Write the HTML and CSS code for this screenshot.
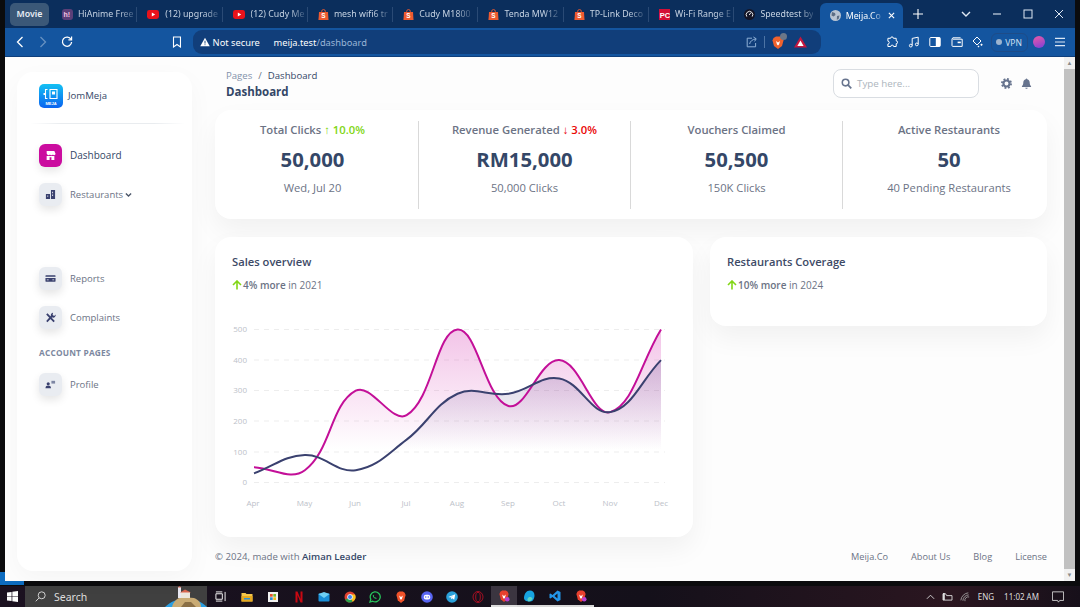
FILE: index.html
```html
<!DOCTYPE html>
<html lang="en">
<head>
  <title>Meija.Co</title>
  <link rel="stylesheet" href="styles.css">
</head>
<body>
  <svg class="icon-defs">
    <symbol id="shopee" viewBox="0 0 11 12">
      <path d="M3.5 3.500V2.600a2 2 0 0 1 4 0v.9" fill="none" stroke="#ee5a30" stroke-width="1"/>
      <path d="M.6 3.200h9.800L11 12H0z" fill="#ee5a30"/>
      <text x="5.500" y="10" class="fav-text fav-s" fill="#fff">S</text>
    </symbol>
  </svg>

  <div class="wallpaper"></div>

  <div class="window">
    <div class="tabstrip">
      <div class="tab-group">Movie</div>
      <div class="tab">
        <svg class="fav" viewBox="0 0 11 11"><rect width="11" height="11" rx="3" fill="#5b3f78"/><text x="1.600" y="8.400" class="fav-text" fill="#f4c6e4">h!</text></svg>
        <span class="tab-label">HiAnime Free</span>
      </div>
      <div class="tab">
        <svg class="fav fav-wide" viewBox="0 0 12 9"><rect width="12" height="9" rx="2.400" fill="#e8121b"/><path d="M4.800 2.500v4l3.400-2z" fill="#fff"/></svg>
        <span class="tab-label">(12) upgrade</span>
      </div>
      <div class="tab">
        <svg class="fav fav-wide" viewBox="0 0 12 9"><rect width="12" height="9" rx="2.400" fill="#e8121b"/><path d="M4.800 2.500v4l3.400-2z" fill="#fff"/></svg>
        <span class="tab-label">(12) Cudy Me</span>
      </div>
      <div class="tab">
        <svg class="fav"><use href="#shopee"/></svg>
        <span class="tab-label">mesh wifi6 tr</span>
      </div>
      <div class="tab">
        <svg class="fav"><use href="#shopee"/></svg>
        <span class="tab-label">Cudy M1800</span>
      </div>
      <div class="tab">
        <svg class="fav"><use href="#shopee"/></svg>
        <span class="tab-label">Tenda MW12</span>
      </div>
      <div class="tab">
        <svg class="fav"><use href="#shopee"/></svg>
        <span class="tab-label">TP-Link Deco</span>
      </div>
      <div class="tab">
        <svg class="fav" viewBox="0 0 11 11"><rect width="11" height="11" fill="#d40f37"/><text x="0.700" y="8.600" class="fav-text fav-pc" fill="#fff">PC</text></svg>
        <span class="tab-label">Wi-Fi Range E</span>
      </div>
      <div class="tab tab-plain">
        <svg class="fav" viewBox="0 0 11 11"><circle cx="5.500" cy="5.500" r="5.500" fill="#141526"/><path d="M2.800 7.600a3.300 3.300 0 1 1 5.400 0" fill="none" stroke="#fff" stroke-width=".9"/><path d="M5.200 6l1.600-2.200" stroke="#fff" stroke-width=".9"/></svg>
        <span class="tab-label">Speedtest by</span>
      </div>
      <div class="tab-active">
        <svg class="fav" viewBox="0 0 11 11"><circle cx="5.500" cy="5.500" r="5.500" fill="#b9c4d2"/><path d="M2 2l3 1 .5 2-2 1.500-2-1zM7 6l2.500-.5L8.600 9 6.800 9.800z" fill="#5c6d84"/></svg>
        <span class="tab-label">Meija.Co</span>
        <svg class="tab-close" viewBox="0 0 8 8"><path d="M1 1l6 6M7 1L1 7" stroke="#fff" stroke-width="1.300"/></svg>
      </div>
      <svg class="tab-new" viewBox="0 0 10 10"><path d="M5 0v10M0 5h10" stroke="#fff" stroke-width="1.100"/></svg>
      <div class="win-btns">
        <svg viewBox="0 0 10 10"><path d="M1 3l4 4 4-4" fill="none" stroke="#dfe8f3" stroke-width="1.400"/></svg>
        <svg viewBox="0 0 10 10"><path d="M1 5h8" stroke="#dfe8f3" stroke-width="1.100"/></svg>
        <svg viewBox="0 0 10 10"><rect x="1" y="1" width="8" height="8" fill="none" stroke="#dfe8f3"/></svg>
        <svg viewBox="0 0 10 10"><path d="M1 1l8 8M9 1l-8 8" stroke="#dfe8f3"/></svg>
      </div>
    </div>

    <div class="toolbar">
      <div class="nav-btns">
        <svg viewBox="0 0 8 12"><path d="M6.500 1L1.500 6l5 5" fill="none" stroke="#fff" stroke-width="1.300"/></svg>
        <svg class="dim" viewBox="0 0 8 12"><path d="M1.500 1l5 5-5 5" fill="none" stroke="#fff" stroke-width="1.300"/></svg>
        <svg viewBox="0 0 12 12"><path d="M10 3.400A4.600 4.600 0 1 0 10.600 6" fill="none" stroke="#fff" stroke-width="1.300"/><path d="M7.400 3.800h3.200V.6" fill="none" stroke="#fff" stroke-width="1.200"/></svg>
      </div>
      <svg class="bookmark" viewBox="0 0 10 12"><path d="M1.500 11V1h7v10L5 8.500z" fill="none" stroke="#fff" stroke-width="1.100"/></svg>
      <div class="address">
        <svg class="warn" viewBox="0 0 12 11"><path d="M6 .5L11.700 10.500H.3z" fill="#fff"/><path d="M6 4v3.400M6 8.300v1" stroke="#124178" stroke-width="1.100"/></svg>
        <span class="not-secure">Not secure</span>
        <span class="url">meija.test<span class="url-path">/dashboard</span></span>
        <svg class="share" viewBox="0 0 12 12"><path d="M7 2.200H2.200v8.600h8.400V7" fill="none" stroke="#8fb0d6" stroke-width="1"/><path d="M4.600 8c.6-2.800 2.600-4.400 6.400-5.200M8.400 1l2.800 1.800L9.600 5.400" fill="none" stroke="#8fb0d6" stroke-width="1"/></svg>
        <span class="addr-sep"></span>
        <span class="lion">
          <svg viewBox="0 0 12 13"><path d="M1.500 2L4 .6h4L10.500 2l1 2.400L10 10l-4 3-4-3L.5 4.400z" fill="#f0622d"/><path d="M4 5l2 1.400L8 5 7 8.600 6 9.400 5 8.600z" fill="#fff"/></svg>
          <span class="lion-badge"></span>
        </span>
        <svg class="rewards" viewBox="0 0 13 12"><path d="M6.500 .5L13 11.500H0z" fill="#c3173f"/><path d="M6.500 4.600L9.600 10H3.400z" fill="#fff"/></svg>
      </div>
      <div class="tool-icons">
        <svg viewBox="0 0 12 12"><path d="M4.600 2.300a1.400 1.400 0 0 1 2.800 0h2.800v2.600a1.400 1.400 0 0 1 0 2.800v2.800H7.600a1.400 1.400 0 0 0-2.800 0H1.900V8a1.400 1.400 0 0 0 0-2.800V2.300z" fill="none" stroke="#fff"/></svg>
        <svg viewBox="0 0 12 12"><path d="M4.200 9.500V2.400l6-1.200v7" fill="none" stroke="#fff"/><circle cx="2.800" cy="9.600" r="1.400" fill="none" stroke="#fff"/><circle cx="8.800" cy="8.400" r="1.400" fill="none" stroke="#fff"/></svg>
        <svg viewBox="0 0 12 12"><rect x=".8" y="1.500" width="10.400" height="9" rx="1" fill="none" stroke="#fff"/><rect x="6.800" y="1.500" width="4.400" height="9" fill="#fff"/></svg>
        <svg viewBox="0 0 12 12"><path d="M1 3v6.600a.8.8 0 0 0 .8.8h9.400V3.200H1.800M1 3l.8-1.200H9.600" fill="none" stroke="#fff"/><rect x="6.600" y="5.600" width="3.200" height="1.600" fill="#fff"/></svg>
        <svg viewBox="0 0 12 12"><path d="M5 1L9 5 5 9 1 5z" fill="none" stroke="#fff"/><path d="M9.500 7.500l1.300 1.300-1.300 1.300-1.300-1.300zM6.500 9.500l1 1-1 1-1-1z" fill="#fff"/></svg>
        <span class="vpn"><i class="vpn-dot"></i>VPN</span>
        <span class="avatar"></span>
        <svg viewBox="0 0 12 12"><path d="M1 2.400h10M1 6h10M1 9.600h10" stroke="#dbe7f5" stroke-width="1.100"/></svg>
      </div>
    </div>

    <div class="viewport">
      <aside class="sidebar">
        <div class="brand">
          <svg class="brand-logo" viewBox="0 0 24 24">
            <defs><linearGradient id="logoGrad" x1="0" y1="0" x2="0" y2="1"><stop offset="0" stop-color="#14c1f3"/><stop offset="1" stop-color="#0a63f0"/></linearGradient></defs>
            <rect width="24" height="24" rx="5" fill="url(#logoGrad)"/>
            <path d="M8.500 5.500h-2v9h2M11 5.500h7v9h-7z" fill="none" stroke="#fff" stroke-width="1.100"/>
            <rect x="13" y="7.500" width="3" height="3" fill="#fff"/>
            <rect x="4.500" y="9" width="2" height="2" fill="#fff"/>
            <text x="12" y="20.500" class="logo-text" fill="#fff">MEJA</text>
          </svg>
          <span class="brand-name">JomMeja</span>
        </div>
        <div class="side-divider"></div>
        <nav class="side-nav">
          <a class="side-item active">
            <span class="tile">
              <svg viewBox="0 0 12 12"><path d="M1.800 1h8.400l1.300 3.200c0 1.600-2.200 1.900-2.800.7-.6 1.200-2.800 1.200-3.400 0-.6 1.200-2.800.9-3.400-.7zM1.800 6.600h8.400V11H7V8H5v3H1.800z" fill="currentColor"/></svg>
            </span>
            <span class="item-label">Dashboard</span>
          </a>
          <a class="side-item">
            <span class="tile">
              <svg viewBox="0 0 12 12"><path d="M6.500 1h4.500v10H6.500zM1 5.500h4.500V11H1z" fill="currentColor"/><path d="M7.800 3h1v1.500h-1zM7.800 6h1v1.500h-1zM2.500 7h1v1.500h-1z" fill="#e9ecf1"/></svg>
            </span>
            <span class="item-label">Restaurants</span>
            <svg class="caret" viewBox="0 0 8 6"><path d="M1 1.200l3 3 3-3" fill="none" stroke="#4a5568" stroke-width="1.500"/></svg>
          </a>
          <a class="side-item reports">
            <span class="tile">
              <svg viewBox="0 0 12 12"><path d="M1 2.500h10a.5.5 0 0 1 .5.5v1H.5V3a.5.5 0 0 1 .5-.5zM.5 5.500h11V9a.5.5 0 0 1-.5.5H1A.5.5 0 0 1 .5 9zM2 7v1h2V7zM8 7v1h2V7z" fill="currentColor" fill-rule="evenodd"/></svg>
            </span>
            <span class="item-label">Reports</span>
          </a>
          <a class="side-item">
            <span class="tile">
              <svg viewBox="0 0 12 12"><path d="M2 10.500L8 4M2 2l8 8.500" fill="none" stroke="currentColor" stroke-width="2"/><path d="M8.800 .8a2.700 2.700 0 0 0-2.300 3.700l1.600 1.500a2.700 2.700 0 0 0 3.500-3.200L10 4.400 8.300 3.200z" fill="currentColor"/></svg>
            </span>
            <span class="item-label">Complaints</span>
          </a>
          <div class="side-heading">ACCOUNT PAGES</div>
          <a class="side-item">
            <span class="tile">
              <svg viewBox="0 0 12 12"><circle cx="3.500" cy="5.200" r="1.700" fill="currentColor"/><path d="M.5 10c0-2 1.300-2.800 3-2.800s3 .8 3 2.800z" fill="currentColor"/><path d="M7 2h4v3H7z" fill="#7d86a3"/></svg>
            </span>
            <span class="item-label">Profile</span>
          </a>
        </nav>
      </aside>

      <main class="main">
        <header class="topbar">
          <div>
            <div class="crumbs"><span class="crumb-dim">Pages</span><span class="crumb-sep">/</span>Dashboard</div>
            <div class="page-title">Dashboard</div>
          </div>
          <div class="top-actions">
            <div class="search">
              <svg viewBox="0 0 12 12"><circle cx="5" cy="5" r="3.600" fill="none" stroke="#67748e" stroke-width="1.700"/><path d="M7.800 7.800l3.400 3.400" stroke="#67748e" stroke-width="1.900"/></svg>
              <span>Type here...</span>
            </div>
            <svg class="top-icon top-gear" viewBox="0 0 12 12"><circle cx="6" cy="6" r="3.300" fill="none" stroke="#67748e" stroke-width="2.300"/><circle cx="6" cy="6" r="5" fill="none" stroke="#67748e" stroke-width="2" stroke-dasharray="2 1.930"/></svg>
            <svg class="top-icon" viewBox="0 0 12 12"><path d="M6 .5c.5 0 .8.400.8.900 1.800.4 2.700 1.800 2.700 3.600 0 2 .6 3 1.500 4v.7H1V9c.9-1 1.500-2 1.500-4 0-1.800.9-3.200 2.700-3.600 0-.5.300-.9.800-.9zM4.700 10.500h2.600c0 .7-.6 1.200-1.300 1.200s-1.300-.5-1.300-1.200z" fill="#67748e"/></svg>
          </div>
        </header>

        <section class="card stats">
          <div class="stats-row">
            <div class="stat">
              <div class="stat-label">Total Clicks <span class="up">↑ 10.0%</span></div>
              <div class="stat-value">50,000</div>
              <div class="stat-sub">Wed, Jul 20</div>
            </div>
            <div class="stat">
              <div class="stat-label">Revenue Generated <span class="down">↓ 3.0%</span></div>
              <div class="stat-value">RM15,000</div>
              <div class="stat-sub">50,000 Clicks</div>
            </div>
            <div class="stat">
              <div class="stat-label">Vouchers Claimed</div>
              <div class="stat-value">50,500</div>
              <div class="stat-sub">150K Clicks</div>
            </div>
            <div class="stat">
              <div class="stat-label">Active Restaurants</div>
              <div class="stat-value">50</div>
              <div class="stat-sub">40 Pending Restaurants</div>
            </div>
          </div>
        </section>

        <div class="panels">
          <section class="card panel">
            <h3>Sales overview</h3>
            <p class="panel-sub"><svg class="arrow" viewBox="0 0 10 10"><path d="M5 9.500V1.500M1 5l4-4 4 4" fill="none" stroke="#82d616" stroke-width="1.600"/></svg><b>4% more</b> in 2021</p>
            <svg id="sales-chart" class="chart" viewBox="0 0 444 195" width="444" height="195">
              <defs>
                <linearGradient id="pinkFill" gradientUnits="userSpaceOnUse" x1="0" y1="10" x2="0" y2="130"><stop offset="0" stop-color="#cb0c9f" stop-opacity=".24"/><stop offset="1" stop-color="#cb0c9f" stop-opacity="0"/></linearGradient>
                <linearGradient id="blueFill" gradientUnits="userSpaceOnUse" x1="0" y1="10" x2="0" y2="130"><stop offset="0" stop-color="#3a1c71" stop-opacity=".26"/><stop offset="1" stop-color="#3a1c71" stop-opacity="0"/></linearGradient>
              </defs>
              <g class="grid">
                <line x1="22" x2="433" y1="9.500" y2="9.500"/>
                <line x1="22" x2="433" y1="40" y2="40"/>
                <line x1="22" x2="433" y1="70.500" y2="70.500"/>
                <line x1="22" x2="433" y1="101" y2="101"/>
                <line x1="22" x2="433" y1="132" y2="132"/>
                <line x1="22" x2="433" y1="162.500" y2="162.500"/>
              </g>
              <g class="y-labels">
                <text x="15" y="12">500</text>
                <text x="15" y="42.500">400</text>
                <text x="15" y="73">300</text>
                <text x="15" y="103.500">200</text>
                <text x="15" y="134.500">100</text>
                <text x="15" y="165">0</text>
              </g>
              <g class="x-labels">
                <text x="21" y="186">Apr</text>
                <text x="72.500" y="186">May</text>
                <text x="123" y="186">Jun</text>
                <text x="174" y="186">Jul</text>
                <text x="225" y="186">Aug</text>
                <text x="276" y="186">Sep</text>
                <text x="327" y="186">Oct</text>
                <text x="378" y="186">Nov</text>
                <text x="429" y="186">Dec</text>
              </g>
              <path id="pink-area" fill="url(#pinkFill)"/>
              <path id="blue-area" fill="url(#blueFill)"/>
              <path id="pink-line" class="line" stroke="#c30f98"/>
              <path id="blue-line" class="line" stroke="#3a416f"/>
            </svg>
          </section>
          <section class="card panel panel-small">
            <h3>Restaurants Coverage</h3>
            <p class="panel-sub"><svg class="arrow" viewBox="0 0 10 10"><path d="M5 9.500V1.500M1 5l4-4 4 4" fill="none" stroke="#82d616" stroke-width="1.600"/></svg><b>10% more</b> in 2024</p>
          </section>
        </div>

        <footer class="foot">
          <div>© 2024, made with <b>Aiman Leader</b></div>
          <div class="foot-links"><a>Meija.Co</a><a>About Us</a><a>Blog</a><a>License</a></div>
        </footer>
      </main>

      <div class="scrollbar">
        <span class="scroll-btn">▲</span>
        <span class="scroll-thumb"></span>
        <span class="scroll-btn">▼</span>
      </div>
    </div>
  </div>

  <div class="taskbar">
    <svg class="start" viewBox="0 0 12 12"><path d="M0 1.700L5 1v4.600H0zM5.800.9L12 0v5.600H5.800zM0 6.400h5V11l-5-.7zM5.800 6.400H12V12l-6.200-.9z" fill="#fff"/></svg>
    <div class="task-search">
      <svg class="task-lens" viewBox="0 0 12 12"><circle cx="7.300" cy="4.700" r="3.800" fill="none" stroke="#ddd"/><path d="M4.500 7.500L.8 11.200" stroke="#ddd"/></svg>
      <span>Search</span>
      <svg class="island" viewBox="0 0 42 21"><path d="M0 21c6-6 13-8 21-8s15 2 21 8z" fill="#2a9fe3"/><path d="M7 21c1-5 5-9 10-10l12 1c5 2 7 5 7 9z" fill="#c9ab74"/><path d="M16 21l4-5h6l5 5z" fill="#8a6f45"/><rect x="13" y="1" width="3" height="11" fill="#e8e8f2"/><path d="M12.500 1.500L14.500 0l2 1.500z" fill="#c85a48"/><rect x="16" y="6" width="9" height="6" fill="#ece6dc"/><path d="M15 6.500l5-3 6 3z" fill="#d8654e"/></svg>
    </div>
    <div class="task-icons">
      <span class="task-view"><svg viewBox="0 0 12 12"><path d="M1 1h7M1 11h7M1 3h7v6H1zM11 1v10" fill="none" stroke="#fff"/></svg></span>
      <span class="app"><svg viewBox="0 0 12 12"><path d="M.5 2h4l1 1h6v7.500H.5z" fill="#f5c64a"/><rect x=".5" y="5" width="11" height="5.500" fill="#e6a920"/><rect x="3" y="7" width="6" height="1.500" fill="#2f8fd3"/></svg></span>
      <span class="app"><svg viewBox="0 0 12 12"><rect x="1" y="1" width="10" height="10" fill="#f1f1f1"/><rect x="3" y="3" width="2.700" height="2.700" fill="#e8532a"/><rect x="6.300" y="3" width="2.700" height="2.700" fill="#75b72b"/><rect x="3" y="6.300" width="2.700" height="2.700" fill="#2f8fd3"/><rect x="6.300" y="6.300" width="2.700" height="2.700" fill="#f5b91f"/></svg></span>
      <span class="app"><svg viewBox="0 0 12 12"><path d="M3.500.5h2L8.500 8V.5h2v11h-2L5.500 4v7.500h-2z" fill="#c90812"/></svg></span>
      <span class="app"><svg viewBox="0 0 12 12"><rect x=".5" y="2.500" width="11" height="8" rx=".8" fill="#1a8fd8"/><path d="M.5 3l5.500 4 5.500-4L6 1z" fill="#6fd0f5"/></svg></span>
      <span class="app"><svg viewBox="0 0 12 12"><circle cx="6" cy="6" r="5.500" fill="#e0412f"/><path d="M6 6L1.200 8.800A5.500 5.500 0 0 0 8.800 10.800z" fill="#2ba24c"/><path d="M6 6l2.800 4.800A5.500 5.500 0 0 0 11 3.500H6z" fill="#f9c41d"/><circle cx="6" cy="6" r="2.500" fill="#3f86ee" stroke="#fff" stroke-width=".8"/></svg></span>
      <span class="app"><svg viewBox="0 0 12 12"><path d="M1 11l.8-2.800A5 5 0 1 1 3.700 10.200z" fill="none" stroke="#27c25a" stroke-width="1.300"/><path d="M4.200 3.700c-.8.800-.4 2 .6 3 1 1 2.200 1.500 3 .7l-1-1.100-.7.400-1.300-1.300.4-.7z" fill="#27c25a"/></svg></span>
      <span class="app"><svg viewBox="0 0 12 13"><path d="M2 2L4 .5h4L10 2l1 2.400L9.500 10 6 13 2.500 10 1 4.400z" fill="#f0522a"/><path d="M4 5l2 1.400L8 5 7 8.600 6 9.400 5 8.600z" fill="#fff"/></svg></span>
      <span class="app"><svg viewBox="0 0 12 12"><circle cx="6" cy="6" r="5.800" fill="#5865f2"/><rect x="2.800" y="3.800" width="6.400" height="4.600" rx="2" fill="#fff"/><circle cx="4.700" cy="6" r=".8" fill="#5865f2"/><circle cx="7.300" cy="6" r=".8" fill="#5865f2"/></svg></span>
      <span class="app"><svg viewBox="0 0 12 12"><circle cx="6" cy="6" r="5.800" fill="#2aa1da"/><path d="M2.300 6l7-2.800-1.100 5.600-2-1.500-1 1-.2-1.700 2.600-2.100-3.300 2z" fill="#fff"/></svg></span>
      <span class="app"><svg viewBox="0 0 12 12"><ellipse cx="6" cy="6" rx="5" ry="5.500" fill="none" stroke="#a30f22"/><ellipse cx="6" cy="6" rx="2.300" ry="4.700" fill="none" stroke="#a30f22"/></svg></span>
      <span class="app app-active"><svg viewBox="0 0 12 13"><path d="M2 2L4 .5h4L10 2l1 2.400L9.500 10 6 13 2.500 10 1 4.400z" fill="#e8402e"/><path d="M4 5l2 1.400L8 5 7 8.600 6 9.400 5 8.600z" fill="#fff"/><circle cx="9.500" cy="10" r="2.500" fill="#b73fd0"/></svg></span>
      <span class="app app-running"><svg viewBox="0 0 12 12"><path d="M1 8c0-4 2.500-7.500 6-7.500 2.500 0 4.500 2 4.500 4.800 0 3-1.500 6.200-4 6.200C4.500 11.500 1 11 1 8z" fill="#17a4e0"/><path d="M5.500 11.500c-1.500-1-1.500-3 0-4 1.500-1 3.500-.3 4 1-.8 2-2.200 3-4 3z" fill="#5ed5c5"/></svg></span>
      <span class="app app-running"><svg viewBox="0 0 12 12"><path d="M8.500.5l3 1.500v8l-3 1.500L3.500 7 1.500 8.500.5 8V4l1-.5 2 1.500zM8.500 3.500L5.500 6l3 2.500z" fill="#2395e8"/></svg></span>
      <span class="app app-running"><svg viewBox="0 0 12 13"><path d="M2 2L4 .5h4L10 2l1 2.400L9.500 10 6 13 2.500 10 1 4.400z" fill="#e8402e"/><path d="M4 5l2 1.400L8 5 7 8.600 6 9.400 5 8.600z" fill="#fff"/><circle cx="9.500" cy="10" r="2.500" fill="#b73fd0"/></svg></span>
    </div>
    <div class="tray">
      <svg class="tray-caret" viewBox="0 0 10 6"><path d="M1 5l4-4 4 4" fill="none" stroke="#ddd"/></svg>
      <svg class="tray-net" viewBox="0 0 12 10"><path d="M1 9V2h3l1 2h6v5z" fill="none" stroke="#ddd"/><path d="M1 1h2v8H1z" fill="#ddd"/></svg>
      <svg class="tray-wifi" viewBox="0 0 12 12"><path d="M1 10a10 10 0 0 1 9-9M3.500 10.500a7 7 0 0 1 7-7M6 11a4 4 0 0 1 5-5" fill="none" stroke="#aaa"/></svg>
      <span class="tray-lang">ENG</span>
      <span class="tray-time">11:02 AM</span>
      <svg class="tray-note" viewBox="0 0 14 14"><path d="M.5 1h13v10H9l-1.500 2L6.500 11H.5z" fill="none" stroke="#ddd"/></svg>
    </div>
  </div>

  <script src="chart.js"></script>
</body>
</html>
```

FILE: styles.css
```css
* {
  box-sizing: border-box;
}

body {
  margin: 0;
  width: 1080px;
  height: 607px;
  overflow: hidden;
  position: relative;
  background-color: #0b0b0d;
  font-family: "Open Sans", Arial, sans-serif;
  color: #6c7385;
}

.icon-defs {
  display: none;
}

.wallpaper {
  position: absolute;
  left: 0;
  top: 572px;
  width: 24px;
  height: 13px;
  background-color: #0d6cc0;
}

.window {
  position: relative;
  width: 1070px;
  height: 581px;
  margin-left: 5px;
  display: flex;
  flex-direction: column;
}

/* browser chrome */
.tabstrip {
  height: 28px;
  flex: none;
  display: flex;
  align-items: center;
  background-color: #0b2e5c;
  color: #c6d3e3;
  font-family: "Noto Sans", Arial, sans-serif;
  font-size: 8.8px;
  padding-left: 5px;
}

.tab-group {
  width: 39px;
  height: 23px;
  margin-right: 3px;
  border-radius: 5px;
  background-color: #3b5878;
  color: #e8eef5;
  font-weight: 600;
  display: flex;
  align-items: center;
  justify-content: center;
}

.tab {
  width: 85.3px;
  height: 15px;
  flex: none;
  padding-left: 10px;
  display: flex;
  align-items: center;
  border-right: 1px solid #2a4a75;
}

.tab-plain {
  border-right: none;
}

.fav {
  width: 11px;
  height: 11px;
  flex: none;
  margin-right: 5px;
}

.fav-wide {
  width: 12px;
  margin-right: 6px;
}

.fav-text {
  font-family: "Liberation Sans", Arial, sans-serif;
  font-size: 7px;
  font-weight: 700;
}

.fav-pc {
  font-size: 7.5px;
}

.fav-s {
  text-anchor: middle;
}

.tab-label {
  flex: none;
  white-space: nowrap;
  -webkit-mask-image: linear-gradient(to right, #000 72%, rgba(0, 0, 0, .25));
  mask-image: linear-gradient(to right, #000 72%, rgba(0, 0, 0, .25));
}

.tab-active {
  width: 83px;
  height: 25px;
  margin-top: 3px;
  flex: none;
  display: flex;
  align-items: center;
  padding-left: 10px;
  border-radius: 6px 6px 0 0;
  background-color: #14559f;
  color: #fff;
}

.tab-close {
  width: 7px;
  height: 7px;
  margin-left: auto;
  margin-right: 8px;
}

.tab-new {
  width: 10px;
  height: 10px;
  margin-left: 10px;
}

.win-btns {
  margin-left: auto;
  display: flex;
  align-items: center;
  padding-right: 11px;
}

.win-btns svg {
  width: 10px;
  height: 10px;
  margin-left: 21px;
}

.toolbar {
  height: 29px;
  flex: none;
  display: flex;
  align-items: center;
  background-color: #14559f;
  border-bottom: 1px solid #0f3f7c;
  color: #fff;
  font-family: "Noto Sans", Arial, sans-serif;
}

.nav-btns {
  width: 167px;
  padding-left: 11px;
  display: flex;
  align-items: center;
  gap: 15px;
}

.nav-btns svg {
  width: 8px;
  height: 12px;
}

.nav-btns svg:last-child {
  width: 12px;
  margin-left: -1px;
}

.dim {
  opacity: .35;
}

.bookmark {
  width: 10px;
  height: 12px;
}

.address {
  width: 630px;
  height: 24px;
  margin-left: 11px;
  padding-left: 7px;
  display: flex;
  align-items: center;
  border-radius: 9px;
  background-color: #113e7a;
  font-size: 9.3px;
}

.warn {
  width: 10px;
  height: 10px;
  margin-right: 3px;
}

.not-secure {
  width: 61px;
  white-space: nowrap;
}

.url {
  width: 471px;
  white-space: nowrap;
}

.url-path {
  color: #9ab5d6;
}

.share {
  width: 12px;
  height: 12px;
}

.addr-sep {
  width: 1px;
  height: 12px;
  margin: 0 7px;
  background-color: #4d74a5;
}

.lion {
  position: relative;
  width: 12px;
  height: 13px;
  margin-right: 10px;
}

.lion svg {
  display: block;
  width: 12px;
  height: 13px;
}

.lion-badge {
  position: absolute;
  top: -3px;
  right: -3px;
  width: 7px;
  height: 7px;
  border-radius: 50%;
  background-color: #6c7788;
}

.rewards {
  width: 13px;
  height: 12px;
}

.tool-icons {
  flex: 1;
  padding-left: 65px;
  display: flex;
  align-items: center;
}

.tool-icons svg {
  width: 12px;
  height: 12px;
  margin-right: 9.5px;
  flex: none;
}

.vpn {
  width: 37px;
  height: 19px;
  margin-left: -3px;
  display: flex;
  align-items: center;
  justify-content: center;
  gap: 3px;
  border: 1px solid #1e4c88;
  border-radius: 6px;
  font-size: 8.5px;
  color: #cfe0f3;
}

.vpn-dot {
  width: 6px;
  height: 6px;
  border-radius: 50%;
  background-color: #9db4cf;
}

.avatar {
  width: 12px;
  height: 12px;
  margin: 0 9px 0 5px;
  flex: none;
  border-radius: 50%;
  background: linear-gradient(160deg, #ee5aa4, #7a3fd8);
}

/* page */
.viewport {
  flex: 1;
  display: flex;
  min-height: 0;
  background-color: #fdfdfd;
}

.sidebar {
  width: 175px;
  margin: 15px 0 10px 12px;
  flex: none;
  padding: 12px 0 0 22px;
  border-radius: 16px;
  background-color: #fff;
  box-shadow: 0 8px 26px rgba(0, 0, 0, .035);
}

.brand {
  display: flex;
  align-items: center;
  gap: 5px;
  font-size: 9.6px;
  color: #344767;
}

.brand-name {
  padding-bottom: 2px;
}

.brand-logo {
  width: 24px;
  height: 24px;
}

.logo-text {
  font-family: "Liberation Sans", Arial, sans-serif;
  font-size: 4px;
  font-weight: 700;
  text-anchor: middle;
}

.side-divider {
  height: 1px;
  margin: 15px 7px 0 -9px;
  background: linear-gradient(to right, transparent, #e9ecef 20%, #e9ecef 80%, transparent);
}

.side-nav {
  margin-top: 20px;
  display: flex;
  flex-direction: column;
  gap: 16px;
}

.side-item {
  height: 23px;
  display: flex;
  align-items: center;
  font-size: 9.5px;
  color: #6c7385;
}

.side-item.active {
  color: #344767;
  font-size: 10px;
  font-weight: 500;
}

.active .item-label {
  padding-bottom: 1px;
}

.reports {
  margin-top: 45px;
}

.tile {
  width: 23px;
  height: 23px;
  margin-right: 8px;
  display: flex;
  align-items: center;
  justify-content: center;
  border-radius: 6px;
  background-color: #e9ecf1;
  color: #3a416f;
  box-shadow: 0 4px 8px rgba(0, 0, 0, .1);
}

.tile svg {
  width: 11px;
  height: 11px;
}

.active .tile {
  background-color: #cb0c9f;
  color: #fff;
}

.caret {
  width: 7px;
  height: 6px;
  margin-left: 2px;
}

.side-heading {
  margin: 2px 0 -2px;
  font-size: 8.3px;
  line-height: 12px;
  font-weight: 700;
  letter-spacing: .2px;
  color: #7c88a0;
}

.main {
  width: 832px;
  margin-left: 23px;
  padding-top: 12px;
  flex: none;
}

.topbar {
  height: 29px;
  padding-left: 11px;
  display: flex;
  justify-content: space-between;
}

.crumbs {
  font-size: 9.6px;
  line-height: 14px;
  color: #344767;
}

.crumb-dim {
  color: #8392ab;
}

.crumb-sep {
  margin: 0 6px;
  color: #6c7385;
}

.page-title {
  margin-top: 1px;
  font-size: 11.5px;
  line-height: 15px;
  font-weight: 700;
  color: #344767;
}

.top-actions {
  padding-right: 15px;
  display: flex;
  align-items: center;
}

.search {
  width: 146px;
  height: 29px;
  padding-left: 7px;
  display: flex;
  align-items: center;
  gap: 5px;
  border: 1px solid #d9dde2;
  border-radius: 8px;
  background-color: #fff;
  font-size: 9.8px;
  color: #adb5bd;
}

.search svg {
  width: 11px;
  height: 11px;
}

.top-icon {
  width: 11px;
  height: 11px;
  margin-left: 9px;
}

.top-gear {
  margin-left: 22px;
}

.card {
  border-radius: 16px;
  background-color: #fff;
  box-shadow: 0 12px 27px rgba(0, 0, 0, .05);
}

.stats {
  height: 109px;
  margin-top: 12px;
  padding-top: 11px;
}

.stats-row {
  margin: 0 -8px;
  display: grid;
  grid-template-columns: repeat(4, 212px);
}

.stat {
  height: 88px;
  text-align: center;
  border-right: 1px solid #d9d9d9;
}

.stat:last-child {
  border-right: none;
}

.stat-label {
  padding-top: 1px;
  font-size: 11.3px;
  line-height: 15px;
  font-weight: 600;
  color: #6c7385;
}

.stat-value {
  margin-top: 7px;
  font-size: 20.3px;
  line-height: 30px;
  font-weight: 700;
  color: #344767;
}

.stat-sub {
  margin-top: 6px;
  font-size: 11.2px;
  line-height: 16px;
}

.up {
  color: #82d616;
}

.down {
  color: #ea0606;
}

.panels {
  margin-top: 18px;
  display: grid;
  grid-template-columns: 478px 337px;
  gap: 17px;
  align-items: start;
}

.panel {
  height: 300px;
  padding: 17px;
}

.panel-small {
  height: 89px;
}

.panel h3 {
  margin: 0;
  font-size: 11.2px;
  line-height: 16px;
  font-weight: 600;
  color: #3d4a66;
}

.panel-sub {
  margin: 7px 0 0;
  display: flex;
  align-items: center;
  font-size: 10px;
  line-height: 16px;
  white-space: pre;
}

.panel-sub b {
  font-weight: 600;
}

.arrow {
  width: 10px;
  height: 10px;
  margin-right: 1px;
}

.chart {
  display: block;
  margin-top: 27px;
}

.grid line {
  stroke: #ededed;
  stroke-width: 1;
  stroke-dasharray: 5 5;
}

.y-labels text {
  font-size: 8px;
  fill: #bcc1c9;
  text-anchor: end;
}

.x-labels text {
  font-size: 8px;
  fill: #bcc1c9;
  text-anchor: middle;
}

.line {
  fill: none;
  stroke-width: 2;
}

.foot {
  margin-top: 13px;
  display: flex;
  justify-content: space-between;
  font-size: 9.6px;
  line-height: 14px;
}

.foot b {
  font-weight: 600;
  color: #344767;
}

.foot-links {
  display: flex;
  gap: 23px;
  font-size: 9.2px;
}

.scrollbar {
  width: 11px;
  margin-left: auto;
  flex: none;
  display: flex;
  flex-direction: column;
  background-color: #f1f1f1;
  font-size: 6px;
  color: #8b8b8b;
  text-align: center;
}

.scroll-btn {
  height: 12px;
  line-height: 12px;
}

.scroll-thumb {
  flex: 1;
  background-color: #c1c1c1;
}

/* windows taskbar */
.taskbar {
  height: 21px;
  margin-top: 5px;
  display: flex;
  align-items: center;
  background: linear-gradient(to right, #1b1120 0%, #14101a 60%, #2b1620 88%, #17101a 100%);
  color: #ddd;
  font-family: "Noto Sans", Arial, sans-serif;
}

.start {
  width: 11px;
  height: 11px;
  margin: 0 7px;
  flex: none;
}

.task-search {
  width: 182px;
  height: 21px;
  flex: none;
  padding-left: 10px;
  display: flex;
  align-items: center;
  overflow: hidden;
  background-color: #404040;
  font-size: 10.5px;
}

.task-lens {
  width: 11px;
  height: 11px;
  margin-right: 8px;
}

.island {
  width: 42px;
  height: 21px;
  margin-left: auto;
}

.task-icons {
  display: flex;
  align-items: center;
}

.task-view {
  width: 27px;
  display: flex;
  justify-content: center;
}

.task-view svg {
  width: 11px;
  height: 11px;
}

.app {
  width: 25.7px;
  height: 21px;
  flex: none;
  display: flex;
  align-items: center;
  justify-content: center;
}

.app svg {
  width: 12px;
  height: 12px;
}

.app-active {
  background-color: #3b3540;
  border-bottom: 2px solid #ddd;
}

.app-running {
  border-bottom: 2px solid #d8d8d8;
}

.tray {
  margin-left: auto;
  display: flex;
  align-items: center;
  font-size: 8px;
}

.tray-caret {
  width: 9px;
  height: 6px;
}

.tray-net {
  width: 11px;
  height: 9px;
  margin-left: 7px;
}

.tray-wifi {
  width: 10px;
  height: 10px;
  margin-left: 7px;
}

.tray-lang {
  margin-left: 8px;
}

.tray-time {
  margin-left: 10px;
}

.tray-note {
  width: 12px;
  height: 12px;
  margin: 0 16px 0 13px;
}
```

FILE: chart.js
```js
// same bezier maths as a tension 0.4 line chart
const labels = 9;
const pink = [50, 40, 300, 220, 500, 250, 400, 230, 500];
const blue = [30, 90, 40, 140, 290, 290, 340, 230, 400];

function toPoints(data) {
  return data.map((v, i) => ({
    x: 22 + i * (407 / (labels - 1)),
    y: 162.5 - v * 0.306,
  }));
}

function linePath(points) {
  const t = 0.4;
  const ctrl = points.map((p, i) => {
    const prev = points[i - 1] || p;
    const next = points[i + 1] || p;
    const d01 = Math.hypot(p.x - prev.x, p.y - prev.y);
    const d12 = Math.hypot(next.x - p.x, next.y - p.y);
    const total = d01 + d12 || 1;
    return {
      inX: p.x - (t * d01 / total) * (next.x - prev.x),
      inY: p.y - (t * d01 / total) * (next.y - prev.y),
      outX: p.x + (t * d12 / total) * (next.x - prev.x),
      outY: p.y + (t * d12 / total) * (next.y - prev.y),
    };
  });

  let d = `M${points[0].x} ${points[0].y}`;
  for (let i = 1; i < points.length; i++) {
    d += `C${ctrl[i - 1].outX} ${ctrl[i - 1].outY} ${ctrl[i].inX} ${ctrl[i].inY} ${points[i].x} ${points[i].y}`;
  }
  return d;
}

function draw(name, data) {
  const points = toPoints(data);
  const d = linePath(points);
  document.getElementById(name + "-line").setAttribute("d", d);
  document.getElementById(name + "-area").setAttribute("d", `${d}L${points[points.length - 1].x} 162.5L22 162.5Z`);
}

draw("pink", pink);
draw("blue", blue);
```
